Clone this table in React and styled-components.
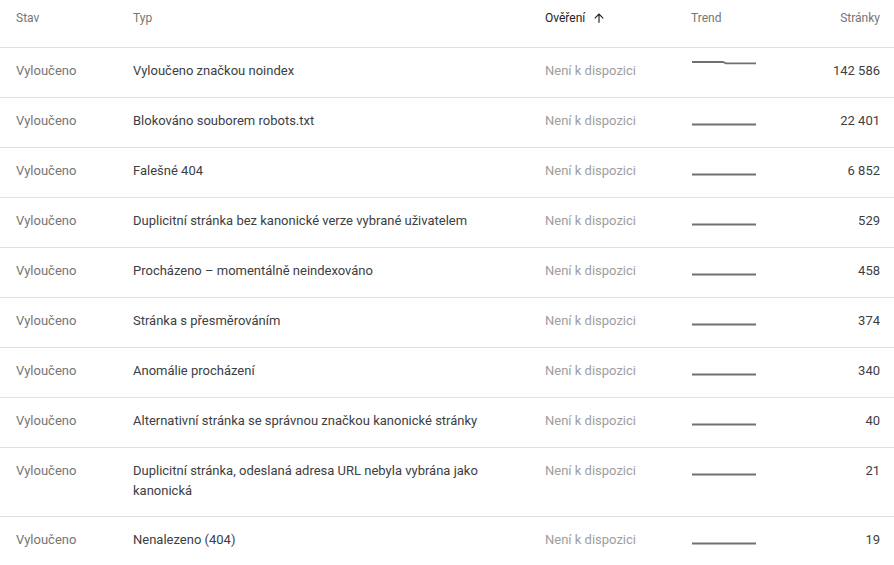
import React from "react";
import styled, { createGlobalStyle } from "styled-components";

const Global = createGlobalStyle`
  html, body { margin: 0; padding: 0; background: #fff; }
  body { font-family: Roboto, "Noto Sans", Arial, sans-serif; -webkit-font-smoothing: antialiased; }
`;

const Table = styled.div`
  width: 894px;
  display: flex;
  flex-direction: column;
`;

const cols = `117px 412px 146px 100px 1fr`;

const HeaderRow = styled.div`
  display: grid;
  grid-template-columns: ${cols};
  padding: 8px 14px 0 16px;
  height: 48px;
  box-sizing: border-box;
  border-bottom: 1px solid #e0e0e0;
`;

const HeaderCell = styled.div`
  font-size: 12px;
  line-height: 20px;
  color: ${(p) => (p.$active ? "#202124" : "#757575")};
  text-align: ${(p) => (p.$right ? "right" : "left")};
  display: flex;
  align-items: center;
  justify-content: ${(p) => (p.$right ? "flex-end" : "flex-start")};
  align-self: start;
  gap: 7px;
`;

const Row = styled.div`
  display: grid;
  grid-template-columns: ${cols};
  padding: 13px 14px 15px 16px;
  border-bottom: ${(p) => (p.$last ? "none" : "1px solid #e0e0e0")};
  align-items: start;
`;

const Cell = styled.div`
  font-size: 13px;
  line-height: 20px;
  color: ${(p) => p.$color || "#333"};
  text-align: ${(p) => (p.$right ? "right" : "left")};
  padding-right: ${(p) => p.$pr || 0}px;
`;

const TrendCell = styled.div`
  height: 21px;
  display: block;
`;

const Spark = ({ points }) => (
  <svg width="66" height="21" viewBox="0 0 66 21" style={{ display: "block" }}>
    <polyline
      points={points}
      fill="none"
      stroke="#707070"
      strokeWidth="1.8"
      strokeLinejoin="round"
    />
  </svg>
);

const ArrowUp = () => (
  <svg width="14" height="14" viewBox="0 0 24 24" style={{ display: "block" }}>
    <path d="M4 12l1.41 1.41L11 7.83V20h2V7.83l5.58 5.59L20 12l-8-8-8 8z" fill="#202124" />
  </svg>
);

const rows = [
  ["Vyloučeno značkou noindex", "142 586", "1,1 32,1 35,2.4 65,2.4"],
  ["Blokováno souborem robots.txt", "22 401"],
  ["Falešné 404", "6 852"],
  ["Duplicitní stránka bez kanonické verze vybrané uživatelem", "529"],
  ["Procházeno – momentálně neindexováno", "458"],
  ["Stránka s přesměrováním", "374"],
  ["Anomálie procházení", "340"],
  ["Alternativní stránka se správnou značkou kanonické stránky", "40"],
  ["Duplicitní stránka, odeslaná adresa URL nebyla vybrána jako kanonická", "21"],
  ["Nenalezeno (404)", "19"],
];

export default function App() {
  return (
    <>
      <Global />
      <Table>
        <HeaderRow>
          <HeaderCell>Stav</HeaderCell>
          <HeaderCell>Typ</HeaderCell>
          <HeaderCell $active>
            Ověření <ArrowUp />
          </HeaderCell>
          <HeaderCell>Trend</HeaderCell>
          <HeaderCell $right>Stránky</HeaderCell>
        </HeaderRow>
        {rows.map(([typ, n, pts], i) => (
          <Row key={i} $last={i === rows.length - 1}>
            <Cell $color="#757575">Vyloučeno</Cell>
            <Cell $color="#3c4043" $pr={32}>{typ}</Cell>
            <Cell $color="#9e9e9e">Není k dispozici</Cell>
            <TrendCell>
              <Spark points={pts || "1,13.5 65,13.5"} />
            </TrendCell>
            <Cell $right $color="#3c4043">{n}</Cell>
          </Row>
        ))}
      </Table>
    </>
  );
}
